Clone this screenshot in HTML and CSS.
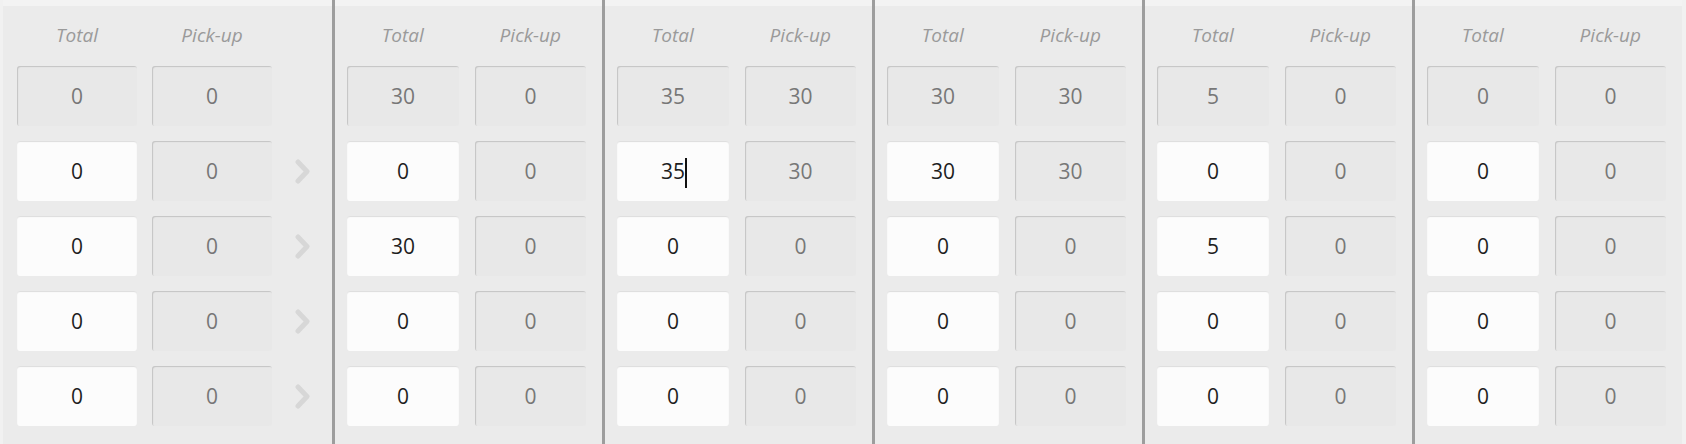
FILE: index.html
```html
<!DOCTYPE html>
<html>
<head>
<meta charset="utf-8">
<link rel="stylesheet" href="styles.css">
</head>
<body>
<div class="board">
  <div class="col first">
    <div class="head"><span class="lbl">Total</span><span class="lbl">Pick-up</span></div>
    <div class="row"><div class="box ro">0</div><div class="box ro">0</div><div class="arrow"></div></div>
    <div class="row"><div class="box ed">0</div><div class="box ro">0</div><div class="arrow"><svg width="15" height="25" viewBox="0 0 15 25"><path d="M3 3 L12 12.5 L3 22" fill="none" stroke="#d7d7d7" stroke-width="5" stroke-linecap="round" stroke-linejoin="round"/></svg></div></div>
    <div class="row"><div class="box ed">0</div><div class="box ro">0</div><div class="arrow"><svg width="15" height="25" viewBox="0 0 15 25"><path d="M3 3 L12 12.5 L3 22" fill="none" stroke="#d7d7d7" stroke-width="5" stroke-linecap="round" stroke-linejoin="round"/></svg></div></div>
    <div class="row"><div class="box ed">0</div><div class="box ro">0</div><div class="arrow"><svg width="15" height="25" viewBox="0 0 15 25"><path d="M3 3 L12 12.5 L3 22" fill="none" stroke="#d7d7d7" stroke-width="5" stroke-linecap="round" stroke-linejoin="round"/></svg></div></div>
    <div class="row"><div class="box ed">0</div><div class="box ro">0</div><div class="arrow"><svg width="15" height="25" viewBox="0 0 15 25"><path d="M3 3 L12 12.5 L3 22" fill="none" stroke="#d7d7d7" stroke-width="5" stroke-linecap="round" stroke-linejoin="round"/></svg></div></div>
  </div>
  <div class="col">
    <div class="head"><span class="lbl">Total</span><span class="lbl">Pick-up</span></div>
    <div class="row"><div class="box ro">30</div><div class="box ro">0</div></div>
    <div class="row"><div class="box ed">0</div><div class="box ro">0</div></div>
    <div class="row"><div class="box ed">30</div><div class="box ro">0</div></div>
    <div class="row"><div class="box ed">0</div><div class="box ro">0</div></div>
    <div class="row"><div class="box ed">0</div><div class="box ro">0</div></div>
  </div>
  <div class="col">
    <div class="head"><span class="lbl">Total</span><span class="lbl">Pick-up</span></div>
    <div class="row"><div class="box ro">35</div><div class="box ro">30</div></div>
    <div class="row"><div class="box ed"><span class="caret">35</span></div><div class="box ro">30</div></div>
    <div class="row"><div class="box ed">0</div><div class="box ro">0</div></div>
    <div class="row"><div class="box ed">0</div><div class="box ro">0</div></div>
    <div class="row"><div class="box ed">0</div><div class="box ro">0</div></div>
  </div>
  <div class="col">
    <div class="head"><span class="lbl">Total</span><span class="lbl">Pick-up</span></div>
    <div class="row"><div class="box ro">30</div><div class="box ro">30</div></div>
    <div class="row"><div class="box ed">30</div><div class="box ro">30</div></div>
    <div class="row"><div class="box ed">0</div><div class="box ro">0</div></div>
    <div class="row"><div class="box ed">0</div><div class="box ro">0</div></div>
    <div class="row"><div class="box ed">0</div><div class="box ro">0</div></div>
  </div>
  <div class="col">
    <div class="head"><span class="lbl">Total</span><span class="lbl">Pick-up</span></div>
    <div class="row"><div class="box ro">5</div><div class="box ro">0</div></div>
    <div class="row"><div class="box ed">0</div><div class="box ro">0</div></div>
    <div class="row"><div class="box ed">5</div><div class="box ro">0</div></div>
    <div class="row"><div class="box ed">0</div><div class="box ro">0</div></div>
    <div class="row"><div class="box ed">0</div><div class="box ro">0</div></div>
  </div>
  <div class="col">
    <div class="head"><span class="lbl">Total</span><span class="lbl">Pick-up</span></div>
    <div class="row"><div class="box ro">0</div><div class="box ro">0</div></div>
    <div class="row"><div class="box ed">0</div><div class="box ro">0</div></div>
    <div class="row"><div class="box ed">0</div><div class="box ro">0</div></div>
    <div class="row"><div class="box ed">0</div><div class="box ro">0</div></div>
    <div class="row"><div class="box ed">0</div><div class="box ro">0</div></div>
  </div>
</div>
</body>
</html>
```
FILE: styles.css
```css
html, body {
  margin: 0;
  padding: 0;
}
body {
  width: 1686px;
  height: 444px;
  overflow: hidden;
  background: #f1f1f1;
  font-family: "Open Sans", "DejaVu Sans", sans-serif;
}
.board {
  display: flex;
  margin-left: 3px;
  width: 1679px;
  height: 444px;
  box-shadow: inset 1px 0 0 #dedede;
}
.col {
  display: flex;
  flex-direction: column;
  gap: 15px;
  width: 270px;
  box-sizing: border-box;
  height: 444px;
  padding: 0 16px 0 12px;
  border-left: 3px solid #9d9d9d;
  background: linear-gradient(#f3f3f3 0, #f3f3f3 6px, #ebebeb 6px);
}
.col.first {
  width: 329px;
  border-left: 0;
  padding: 0 15px 0 14px;
}
.head {
  display: flex;
  gap: 16px;
  height: 51px;
  padding-top: 22px;
  box-sizing: border-box;
  margin-bottom: -15px;
  height: 66px;
}
.first .head { gap: 15px; }
.lbl {
  width: 112px;
  text-align: center;
  font-style: italic;
  font-size: 19px;
  line-height: 26px;
  color: #9a9a9a;
}
.first .lbl { width: 120px; }
.row {
  display: flex;
  gap: 16px;
  height: 60px;
}
.first .row { gap: 15px; }
.box {
  width: 112px;
  height: 60px;
  box-sizing: border-box;
  border-radius: 3px;
  display: flex;
  align-items: center;
  justify-content: center;
  font-size: 21px;
}
.col:not(.first) .box + .box { width: 111px; }
.first .box { width: 120px; }
.ro {
  background: #e8e8e8;
  color: #777;
  box-shadow: inset 1px 1px 1px #c4c4c4;
}
.ed {
  background: #fcfcfc;
  color: #1e1e1e;
  box-shadow: inset 0 1px 1px #dcdcdc;
}
.arrow {
  width: 30px;
  display: flex;
  align-items: center;
  justify-content: center;
}
.caret {
  position: relative;
}
.caret::after {
  content: "";
  position: absolute;
  right: -2px;
  top: 1px;
  width: 2px;
  height: 30px;
  background: #111;
}
```
